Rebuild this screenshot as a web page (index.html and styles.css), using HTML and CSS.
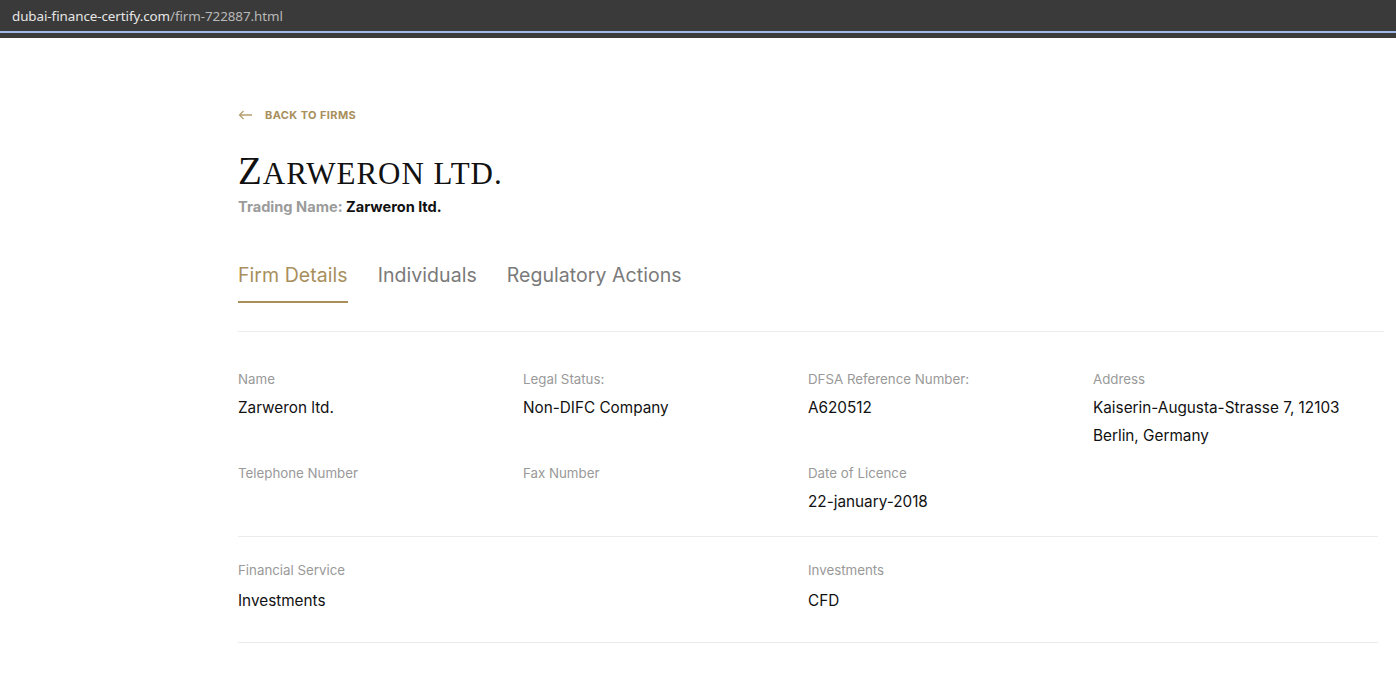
FILE: index.html
```html
<!DOCTYPE html>
<html lang="en">
<head>
<meta charset="utf-8">
<title>Zarweron ltd.</title>
<link rel="stylesheet" href="styles.css">
</head>
<body>
<div class="chrome">
  <div class="urlbar"><span class="domain">dubai-finance-certify.com</span><span class="path">/firm-722887.html</span></div>
  <div class="progress"></div>
  <div class="chrome-foot"></div>
</div>
<main class="page">
  <a class="back" href="#">
    <svg class="back-icon" width="15" height="10" viewBox="0 0 15 10" fill="none" stroke="#b59f6e" stroke-width="1.3"><path d="M14 5H1.5M5.5 1L1.5 5l4 4"/></svg>
    <span>BACK TO FIRMS</span>
  </a>
  <h1 class="title">Zarweron ltd.</h1>
  <p class="trading"><span class="trading-label">Trading Name:</span> <span class="trading-value">Zarweron ltd.</span></p>

  <nav class="tabs">
    <a class="tab active" href="#">Firm Details</a>
    <a class="tab" href="#">Individuals</a>
    <a class="tab" href="#">Regulatory Actions</a>
  </nav>

  <section class="details">
    <div class="grid">
      <div class="field"><div class="label">Name</div><div class="value">Zarweron ltd.</div></div>
      <div class="field"><div class="label">Legal Status:</div><div class="value">Non-DIFC Company</div></div>
      <div class="field"><div class="label">DFSA Reference Number:</div><div class="value">A620512</div></div>
      <div class="field"><div class="label">Address</div><div class="value">Kaiserin-Augusta-Strasse 7, 12103<br>Berlin, Germany</div></div>
      <div class="field"><div class="label">Telephone Number</div><div class="value"></div></div>
      <div class="field"><div class="label">Fax Number</div><div class="value"></div></div>
      <div class="field"><div class="label">Date of Licence</div><div class="value">22-january-2018</div></div>
      <div class="field"></div>
    </div>
    <div class="grid services">
      <div class="field wide"><div class="label">Financial Service</div><div class="value">Investments</div></div>
      <div class="field wide"><div class="label">Investments</div><div class="value">CFD</div></div>
    </div>
  </section>
</main>
</body>
</html>
```

FILE: styles.css
```css
* { box-sizing: border-box; }
html, body { margin: 0; padding: 0; background: #fff; }
body { font-family: Inter, "Noto Sans", Roboto, sans-serif; color: #111; }

.chrome { background: #3a3a3a; height: 38px; }
.urlbar {
  height: 31px;
  padding-left: 12px;
  display: flex;
  align-items: center;
  font-family: "Noto Sans", "Open Sans", sans-serif;
  font-size: 13.4px;
  letter-spacing: -0.07px;
}
.domain { color: #e6e6e6; }
.path { color: #b8b8b8; }
.progress { height: 2px; background: #9fb9e6; }
.chrome-foot { height: 5px; }

.page { width: 1146px; margin-left: 238px; padding-top: 69px; }

.back {
  display: flex;
  align-items: center;
  gap: 12px;
  text-decoration: none;
  color: #a88f5c;
  font-size: 11px;
  font-weight: 700;
  letter-spacing: 0.4px;
  height: 16px;
}
.back-icon { display: block; }

.title {
  margin: 30px 0 5px;
  font-family: "Liberation Serif", "DejaVu Serif", serif;
  font-weight: 400;
  font-size: 31px;
  text-transform: uppercase;
  letter-spacing: 1px;
  line-height: 36px;
  color: #111;
}
.title::first-letter { font-size: 39px; }

.trading { margin: 0; font-size: 14.6px; font-weight: 700; line-height: 20px; }
.trading-label { color: #9b9b9b; }
.trading-value { color: #111; }

.tabs {
  display: flex;
  gap: 30px;
  margin-top: 46px;
  border-bottom: 1px solid #ececec;
  padding-bottom: 28px;
}
.tab {
  text-decoration: none;
  font-size: 19.5px;
  letter-spacing: 0.05px;
  color: #7a7a7a;
  padding-bottom: 14px;
  border-bottom: 2px solid transparent;
  line-height: 24px;
}
.tab.active { color: #a88f5c; border-bottom-color: #a88f5c; }

.details { width: 1140px; padding-top: 38px; }
.grid {
  display: grid;
  grid-template-columns: repeat(4, 285px);
  row-gap: 14px;
  border-bottom: 1px solid #ececec;
  padding-bottom: 20px;
}
.services {
  grid-template-columns: repeat(2, 570px);
  padding-top: 24px;
  padding-bottom: 27px;
}
.label { font-size: 13.3px; color: #999; line-height: 18px; }
.value { font-size: 15.3px; color: #111; line-height: 28px; margin-top: 6px; min-height: 28px; }
.services .value { margin-top: 8px; }
```
